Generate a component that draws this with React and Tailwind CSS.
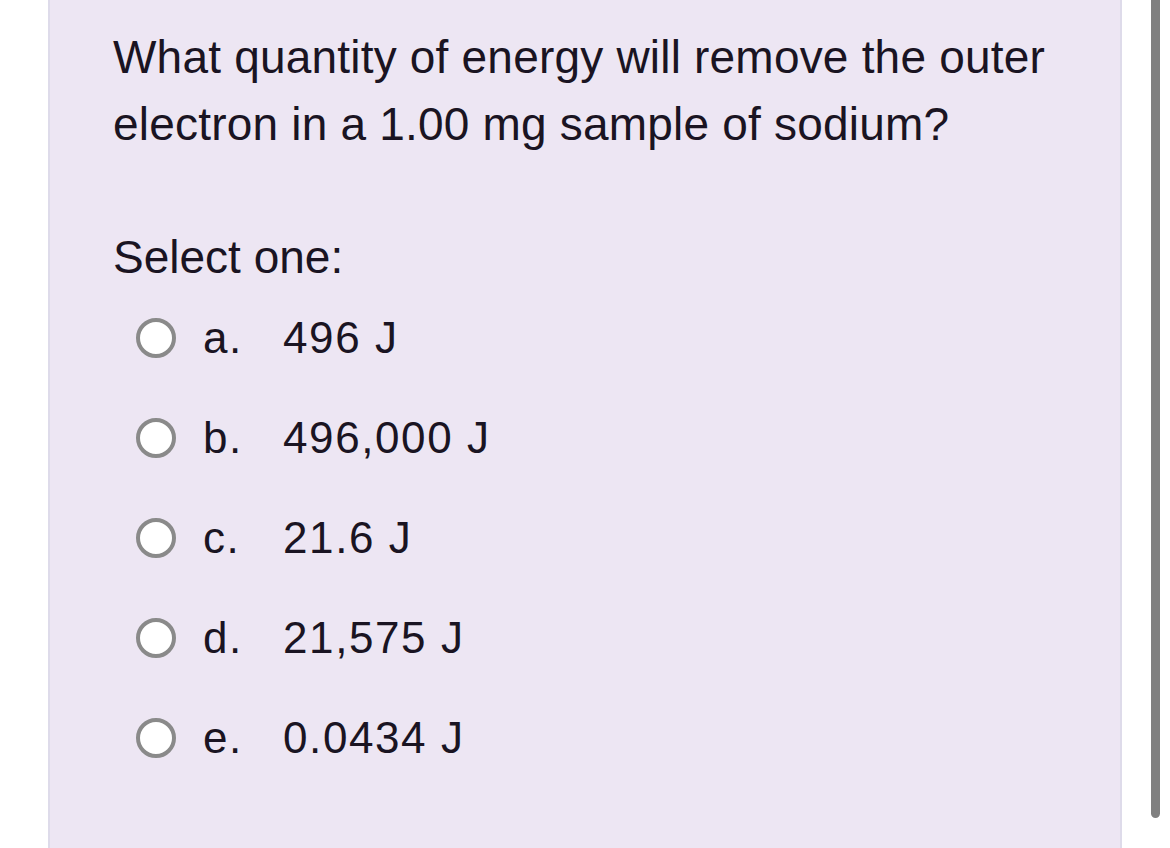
import React from 'react';

const options = [
  { key: 'a.', value: '496 J' },
  { key: 'b.', value: '496,000 J' },
  { key: 'c.', value: '21.6 J' },
  { key: 'd.', value: '21,575 J' },
  { key: 'e.', value: '0.0434 J' },
];

export default function App() {
  return (
    <div className="relative h-[848px] w-[1170px] overflow-hidden bg-white font-['Liberation_Sans',Arial,sans-serif] text-[#1a1422]">
      <div className="ml-[48px] h-full w-[1074px] border-x-2 border-[#dedbea] bg-[#ede6f3] pl-[63px] pt-[24px]">
        <p className="text-[46px] leading-[67px] tracking-[0.2px]">
          What quantity of energy will remove the outer electron in a 1.00 mg sample of sodium?
        </p>
        <p className="mt-[74px] text-[46px] leading-[50px]">Select one:</p>
        <div className="mt-[6px] flex flex-col">
          {options.map((o) => (
            <label key={o.key} className="flex h-[100px] items-center text-[44px] tracking-[1.6px]">
              <span className="ml-[23px] h-[40px] w-[40px] shrink-0 rounded-full border-[4px] border-[#8a8a8a] bg-white" />
              <span className="ml-[27px] w-[80px]">{o.key}</span>
              <span>{o.value}</span>
            </label>
          ))}
        </div>
      </div>
      <div className="absolute right-[10px] top-0 h-[818px] w-[9px] rounded-b-full bg-[#808080]" />
    </div>
  );
}
